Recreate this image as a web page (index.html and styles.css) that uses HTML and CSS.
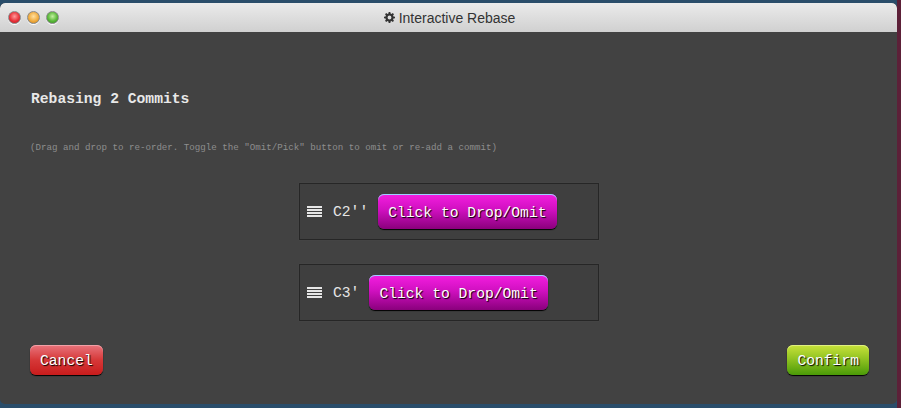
FILE: index.html
```html
<!DOCTYPE html>
<html>
<head>
<meta charset="utf-8">
<link rel="stylesheet" href="styles.css">
</head>
<body>
<div class="desktop">
  <div class="window">
    <div class="titlebar">
      <div class="lights">
        <span class="light l-red"></span>
        <span class="light l-yellow"></span>
        <span class="light l-green"></span>
      </div>
      <div class="wtitle">
        <svg class="gear" width="11" height="11" viewBox="0 0 16 16"><path fill="#333" d="M6.8 0h2.4l.4 2.2 1.3.6 1.9-1.3 1.7 1.7-1.3 1.9.6 1.3 2.2.4v2.4l-2.2.4-.6 1.3 1.3 1.9-1.7 1.7-1.9-1.3-1.3.6-.4 2.2H6.8l-.4-2.2-1.3-.6-1.9 1.3-1.7-1.7 1.3-1.9-.6-1.3L0 9.2V6.8l2.2-.4.6-1.3-1.3-1.9 1.7-1.7 1.9 1.3 1.3-.6zM8 5.2A2.8 2.8 0 1 0 8 10.8 2.8 2.8 0 1 0 8 5.2z"/></svg>
        <span>Interactive Rebase</span>
      </div>
    </div>
    <div class="body">
      <h1 class="heading">Rebasing 2 Commits</h1>
      <p class="hint">(Drag and drop to re-order. Toggle the "Omit/Pick" button to omit or re-add a commit)</p>
      <div class="list">
        <div class="commit">
          <span class="grip"><i></i><i></i><i></i><i></i></span>
          <span class="cname">C2''</span>
          <button class="btn pink">Click to Drop/Omit</button>
        </div>
        <div class="commit">
          <span class="grip"><i></i><i></i><i></i><i></i></span>
          <span class="cname">C3'</span>
          <button class="btn pink">Click to Drop/Omit</button>
        </div>
      </div>
      <div class="actions">
        <button class="btn b-red">Cancel</button>
        <button class="btn b-green">Confirm</button>
      </div>
    </div>
  </div>
</div>
</body>
</html>
```

FILE: styles.css
```css
* { box-sizing: border-box; }
html, body { margin: 0; padding: 0; }
body { width: 901px; height: 408px; overflow: hidden; }

.desktop {
  width: 901px;
  height: 408px;
  padding-top: 3px;
  background: linear-gradient(to right, #2a4d6a 0, #2a4d6a 897px, #5c2038 897px);
}

.window {
  width: 897px;
  height: 401px;
  background: #424242;
  border-radius: 5px;
  overflow: hidden;
  display: flex;
  flex-direction: column;
}

.titlebar {
  height: 29px;
  flex: none;
  position: relative;
  background: linear-gradient(#ebebeb, #d0d0d0);
  display: flex;
  align-items: center;
  justify-content: center;
  border-radius: 5px 5px 0 0;
}

.lights {
  position: absolute;
  left: 8px;
  top: 8px;
  display: flex;
  align-items: flex-start;
  gap: 6px;
}
.light {
  display: block;
  width: 13px;
  height: 13px;
  border-radius: 50%;
  border: 1px solid #8a8a8a;
  box-shadow: 0 1px 0 #fff;
}
.l-red { background: radial-gradient(circle at 50% 40%, #ff9a9a 0, #e8323a 55%, #b31820 100%); }
.l-yellow { background: radial-gradient(circle at 50% 40%, #ffe0a0 0, #f0ac40 55%, #c07a14 100%); }
.l-green { background: radial-gradient(circle at 50% 40%, #c4f0a0 0, #5ab83a 55%, #2e8a1a 100%); }

.wtitle {
  display: flex;
  align-items: center;
  gap: 4px;
  font-family: "Liberation Sans", Arial, sans-serif;
  font-size: 14px;
  color: #333;
  margin-left: 2px;
}

.body {
  flex: 1;
  padding: 0 28px 0 31px;
  font-family: "Liberation Mono", monospace;
  display: flex;
  flex-direction: column;
}

.heading {
  margin: 58px 0 0 0;
  font-size: 14.67px;
  line-height: 18px;
  font-weight: bold;
  color: #e8e8e8;
}

.hint {
  margin: 34px 0 0 -1px;
  font-size: 9.17px;
  line-height: 12px;
  color: #8e8e8e;
}

.list {
  margin-top: 29px;
  display: flex;
  flex-direction: column;
  align-items: center;
  gap: 24px;
  margin-left: -31px;
  margin-right: -28px;
}

.commit {
  width: 300px;
  height: 57px;
  background: #3f3f3f;
  border: 1px solid #262626;
  box-shadow: 0 0 1px #555;
  display: flex;
  align-items: center;
  padding-left: 7px;
  margin-left: 1px;
}

.grip {
  width: 15px;
  display: flex;
  flex-direction: column;
  gap: 1px;
  margin-right: 11px;
}
.grip i {
  display: block;
  height: 2px;
  background: #e6e6e6;
}

.cname {
  font-size: 14.67px;
  color: #e6e6e6;
  margin-right: 10px;
  white-space: pre;
}

.btn {
  font-family: "Liberation Mono", monospace;
  font-size: 14.67px;
  color: #fff;
  border: none;
  border-radius: 6px;
  padding: 2px 10px 0;
  cursor: pointer;
  text-shadow: 1px 1px 1px #000;
}

.pink {
  height: 35px;
  background: linear-gradient(#f41ee0, #d010c0 45%, #8a007c);
  box-shadow: inset 0 1px 0 #9fd0ff, 0 1px 1px #000;
}

.actions {
  margin-top: 24px;
  display: flex;
  justify-content: space-between;
  margin-left: -1px;
}

.b-red {
  height: 30px;
  background: linear-gradient(#e8747c, #d63838 50%, #c81c1c);
  box-shadow: inset 0 1px 0 #f2a0a6, 0 1px 1px #000;
}

.b-green {
  height: 30px;
  background: linear-gradient(#c8e23a, #8cc020 50%, #4a9a08);
  box-shadow: inset 0 1px 0 #e0f080, 0 1px 1px #000;
}
```
